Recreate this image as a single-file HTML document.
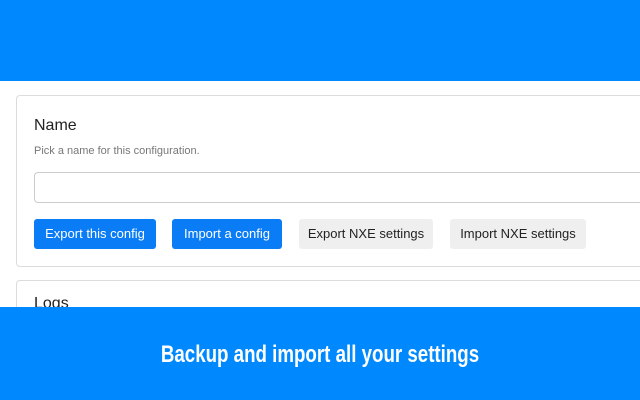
<!DOCTYPE html>
<html><head><style>
body{margin:0;width:640px;height:400px;overflow:hidden;background:#fff;font-family:"Liberation Sans",sans-serif;position:relative}
.top{position:absolute;left:0;top:0;width:640px;height:81px;background:#0088ff}
.card{position:absolute;left:16px;width:640px;border:1px solid #dcdcdc;border-radius:4px;background:#fff}
.c1{top:95px;height:170px}
.c2{top:280px;height:60px}
h1{position:absolute;left:17px;top:21px;margin:0;font-size:16px;font-weight:normal;color:#222}
.sub{position:absolute;left:17px;top:49px;font-size:11px;color:#777}
.inp{position:absolute;left:17px;top:76px;width:640px;height:29px;border:1px solid #ccc;border-radius:4px}
.btn{position:absolute;top:123px;height:30px;line-height:30px;font-size:13px;border-radius:3px;text-align:center}
.b{background:#0a7cf5;color:#fff}
.g{background:#efefef;color:#222}
.logs{position:absolute;left:17px;top:14px;font-size:16px;color:#222}
.bot{position:absolute;left:0;top:307px;width:640px;height:93px;background:#0088ff}
.bot span{position:absolute;left:320px;top:34px;white-space:nowrap;color:#fff;font-weight:bold;font-size:24px;transform:translateX(-50%) scaleX(0.78);transform-origin:center}
</style></head><body>
<div class="top"></div>
<div class="card c1">
<h1>Name</h1>
<div class="sub">Pick a name for this configuration.</div>
<div class="inp"></div>
<div class="btn b" style="left:17px;width:122px">Export this config</div>
<div class="btn b" style="left:155px;width:110px">Import a config</div>
<div class="btn g" style="left:282px;width:134px">Export NXE settings</div>
<div class="btn g" style="left:433px;width:136px">Import NXE settings</div>
</div>
<div class="card c2"><div class="logs">Logs</div></div>
<div class="bot"><span>Backup and import all your settings</span></div>
</body></html>
